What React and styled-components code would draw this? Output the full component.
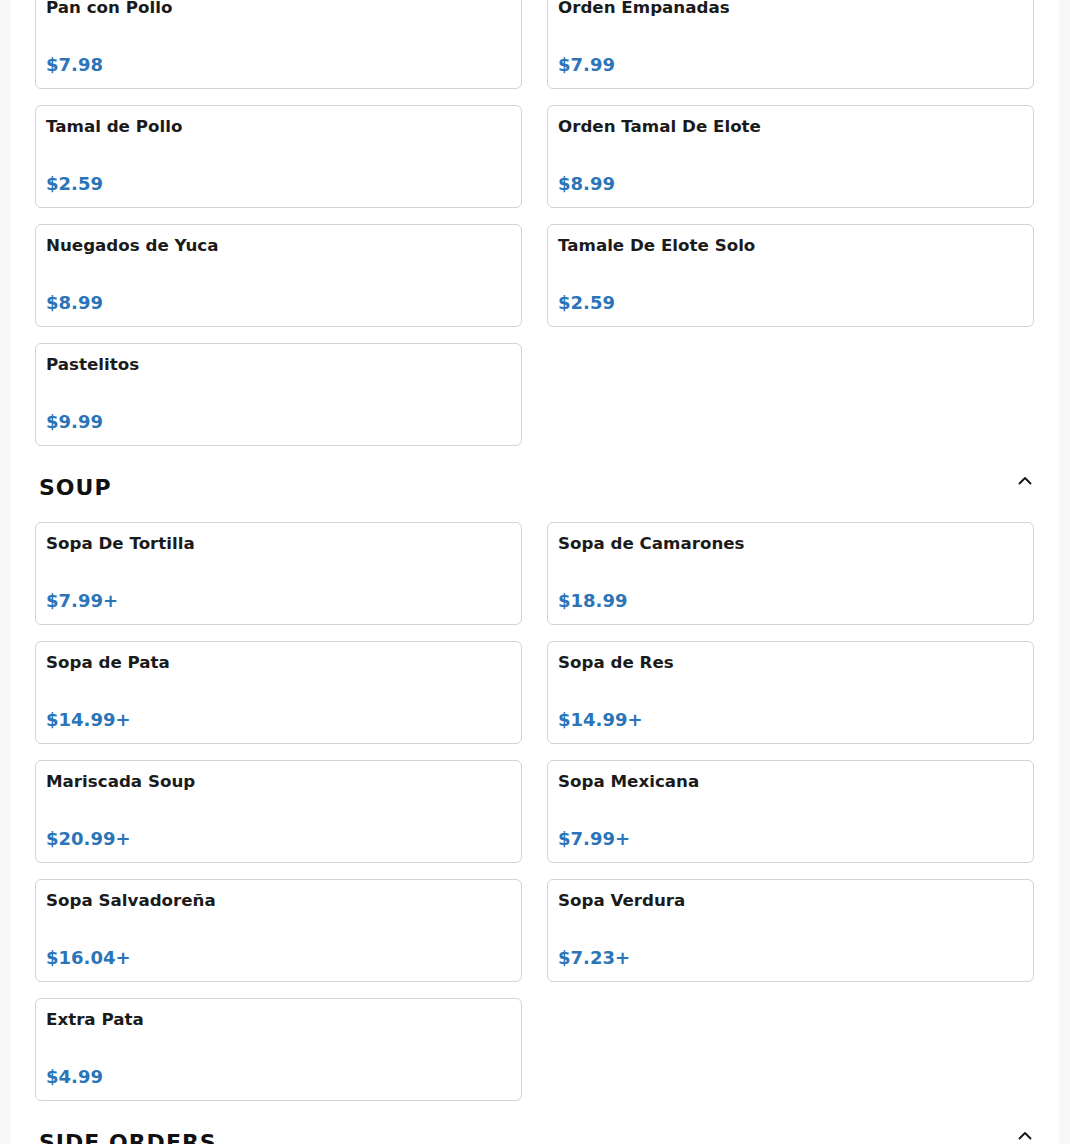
import React from "react";
import styled, { createGlobalStyle } from "styled-components";

const GlobalStyle = createGlobalStyle`
  html, body {
    margin: 0;
    padding: 0;
    background: #f8f8f8;
    font-family: "DejaVu Sans", "Liberation Sans", sans-serif;
    color: #1b1b1b;
  }
`;

const Page = styled.div`
  width: 1048px;
  margin: -14px auto 0;
  background: #ffffff;
  padding: 0 25px 40px 24px;
  box-sizing: border-box;
  overflow: hidden;
`;

const Section = styled.section`
  display: flex;
  flex-direction: column;
`;

const SectionHeader = styled.div`
  display: flex;
  align-items: center;
  justify-content: space-between;
  margin: 27px 0 19px;
  padding: 0 2px 0 4px;
  height: 30px;
`;

const SectionTitle = styled.h2`
  margin: 0;
  font-size: 22px;
  line-height: 30px;
  font-weight: 700;
  letter-spacing: 1px;
  color: #111;
`;

const Chevron = styled.span`
  display: flex;
  margin-top: -16px;
`;

const Grid = styled.div`
  display: grid;
  grid-template-columns: 1fr 1fr;
  column-gap: 25px;
  row-gap: 16px;
`;

const Card = styled.div`
  height: 103px;
  box-sizing: border-box;
  border: 1px solid #d4d4d4;
  border-radius: 6px;
  padding: 10px 10px 13px;
  display: flex;
  flex-direction: column;
  justify-content: space-between;
`;

const ItemName = styled.div`
  font-size: 16.7px;
  line-height: 20px;
  font-weight: 700;
  color: #1b1b1b;
`;

const Price = styled.div`
  font-size: 18px;
  line-height: 20px;
  font-weight: 700;
  color: #2b74b8;
`;

const ChevronUp = () => (
  <svg width="14" height="9" viewBox="0 0 14 9" fill="none">
    <path d="M1.5 7.5L7 2l5.5 5.5" stroke="#111" strokeWidth="1.8" strokeLinecap="round" strokeLinejoin="round" />
  </svg>
);

const topItems = [
  ["Pan con Pollo", "$7.98"],
  ["Orden Empanadas", "$7.99"],
  ["Tamal de Pollo", "$2.59"],
  ["Orden Tamal De Elote", "$8.99"],
  ["Nuegados de Yuca", "$8.99"],
  ["Tamale De Elote Solo", "$2.59"],
  ["Pastelitos", "$9.99"],
];

const soupItems = [
  ["Sopa De Tortilla", "$7.99+"],
  ["Sopa de Camarones", "$18.99"],
  ["Sopa de Pata", "$14.99+"],
  ["Sopa de Res", "$14.99+"],
  ["Mariscada Soup", "$20.99+"],
  ["Sopa Mexicana", "$7.99+"],
  ["Sopa Salvadoreña", "$16.04+"],
  ["Sopa Verdura", "$7.23+"],
  ["Extra Pata", "$4.99"],
];

const ItemGrid = ({ items }) => (
  <Grid>
    {items.map(([name, price]) => (
      <Card key={name}>
        <ItemName>{name}</ItemName>
        <Price>{price}</Price>
      </Card>
    ))}
  </Grid>
);

const Header = ({ title }) => (
  <SectionHeader>
    <SectionTitle>{title}</SectionTitle>
    <Chevron>
      <ChevronUp />
    </Chevron>
  </SectionHeader>
);

const App = () => (
  <>
    <GlobalStyle />
    <Page>
      <Section>
        <ItemGrid items={topItems} />
      </Section>
      <Section>
        <Header title="SOUP" />
        <ItemGrid items={soupItems} />
      </Section>
      <Section>
        <Header title="SIDE ORDERS" />
        <ItemGrid items={[["Curtido Extra", "$1.99"], ["Frijoles", "$3.99"]]} />
      </Section>
    </Page>
  </>
);

export default App;
